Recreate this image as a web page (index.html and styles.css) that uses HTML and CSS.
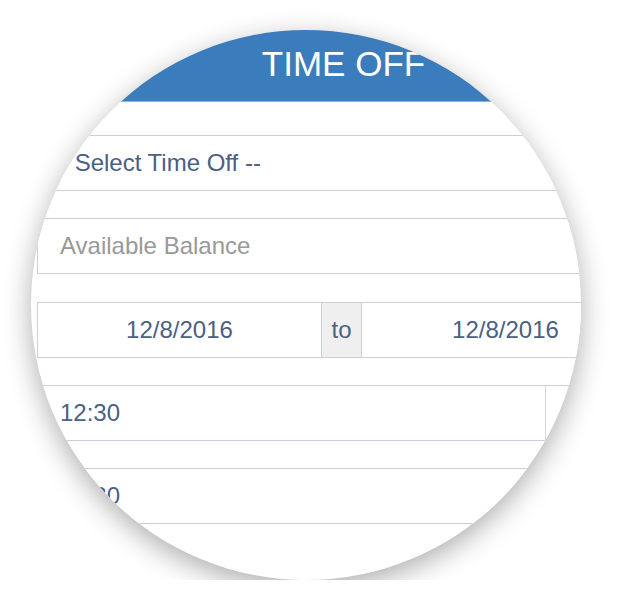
FILE: index.html
```html
<!DOCTYPE html>
<html>
<head>
<meta charset="utf-8">
<title>Time Off</title>
<link rel="stylesheet" href="styles.css">
</head>
<body>
<div class="stage">
  <div class="lens">
    <div class="form">
      <div class="header">TIME OFF</div>
      <div class="field select">-- Select Time Off --</div>
      <div class="field placeholder">Available Balance</div>
      <div class="group">
        <div class="field date date-from">12/8/2016</div>
        <div class="addon">to</div>
        <div class="field date date-to">12/8/2016</div>
      </div>
      <div class="group">
        <div class="field time">12:30</div>
        <div class="addon-btn"></div>
      </div>
      <div class="group">
        <div class="field time">12:30</div>
        <div class="addon-btn"></div>
      </div>
    </div>
  </div>
</div>
</body>
</html>
```

FILE: styles.css
```css
html, body {
  margin: 0;
  padding: 0;
  background: #ffffff;
}

body {
  font-family: "Liberation Sans", Arial, Helvetica, sans-serif;
  color: #4b6083;
}

.stage {
  padding: 30px 0 0 31px;
}

.lens {
  width: 550px;
  height: 550px;
  border-radius: 50%;
  overflow: hidden;
  background: #ffffff;
  box-shadow: 0 8px 28px rgba(0, 0, 0, 0.32);
}

.form {
  margin-left: 6px;
  width: 613px;
}

.header {
  height: 71px;
  line-height: 67px;
  background: #3b7cbc;
  border-bottom: 1px solid #8fb2d9;
  color: #ffffff;
  font-size: 35px;
  text-align: center;
  margin-bottom: 33px;
}

.field {
  box-sizing: border-box;
  height: 56px;
  line-height: 54px;
  border: 1px solid #c8d0de;
  font-size: 24px;
  padding: 0 22px;
  white-space: nowrap;
  margin-bottom: 27.25px;
  background: #ffffff;
}

.select {
  padding-left: 14px;
}

.placeholder {
  color: #999999;
}

.group {
  display: flex;
  margin-bottom: 27.25px;
}

.group .field {
  margin-bottom: 0;
}

.date {
  text-align: center;
  padding: 0;
}

.date-from {
  width: 285px;
}

.date-to {
  flex: 1;
  border-left: none;
}

.addon {
  box-sizing: border-box;
  width: 40px;
  height: 56px;
  line-height: 54px;
  border-top: 1px solid #c8d0de;
  border-bottom: 1px solid #c8d0de;
  border-left: 1px solid #c8d0de;
  border-right: 1px solid #c8d0de;
  border-left: none;
  background: #efefef;
  font-size: 24px;
  text-align: center;
}

.time {
  width: 509px;
  border-right-color: #d6d6d6;
}

.addon-btn {
  box-sizing: border-box;
  flex: 1;
  height: 56px;
  border-top: 1px solid #c8d0de;
  border-bottom: 1px solid #c8d0de;
  border-right: 1px solid #c8d0de;
}
```
